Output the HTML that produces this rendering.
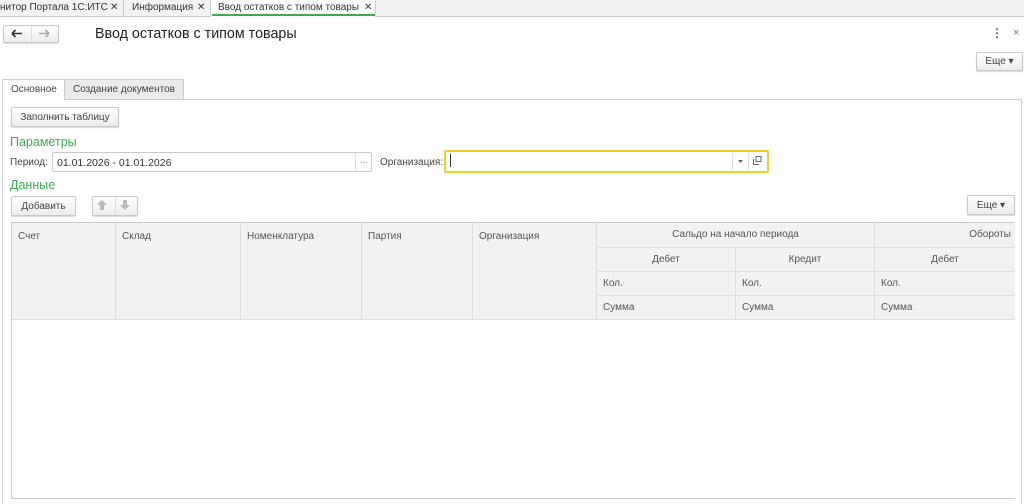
<!DOCTYPE html>
<html style="width:1024px;height:504px;overflow:hidden"><head><meta charset="utf-8"><style>
*{box-sizing:border-box;margin:0;padding:0}
body{width:1024px;height:504px;overflow:hidden;background:#fff;font-family:"Liberation Sans",sans-serif;font-size:10px;color:#444;position:relative}
.a{position:absolute;white-space:nowrap}
.btn{position:absolute;border:1px solid #c8c8c8;border-radius:2px;background:linear-gradient(#fff,#ececec);box-shadow:0 1px 1px rgba(0,0,0,.15);color:#444;text-align:center;white-space:nowrap}
.g{color:#3bab4e;font-size:12.5px}
.c{position:absolute;border-right:1px solid #ddd;border-bottom:1px solid #ddd;background:#f2f2f2;padding:0 6px;color:#555;font-size:10px;white-space:nowrap}
</style></head><body>
<div class="a" style="left:0;top:0;width:1024px;height:17px;background:#f2f2f2;border-bottom:1px solid #c8c8c8"></div>
<div class="a" style="left:0;top:2px;color:#333">нитор Портала 1С:ИТС</div>
<div class="a" style="left:110px;top:2px;color:#333">✕</div>
<div class="a" style="left:123px;top:0;width:1px;height:16px;background:#ccc"></div>
<div class="a" style="left:132px;top:2px;color:#333">Информация</div>
<div class="a" style="left:197px;top:2px;color:#333">✕</div>
<div class="a" style="left:210px;top:0;width:166px;height:17px;background:#fff;border-left:1px solid #ccc;border-right:1px solid #ccc"></div>
<div class="a" style="left:212px;top:14px;width:163px;height:2px;background:#3bab4e"></div>
<div class="a" style="left:218px;top:2px;color:#333">Ввод остатков с типом товары</div>
<div class="a" style="left:364px;top:2px;color:#333">✕</div>

<div class="btn" style="left:3px;top:25px;width:56px;height:18px"></div>
<div class="a" style="left:31px;top:26px;width:1px;height:16px;background:#ddd"></div>
<svg class="a" style="left:11px;top:29px" width="12" height="9"><path d="M1 4.5H11M1 4.5L4.5 1M1 4.5L4.5 8" stroke="#333" stroke-width="1.6" fill="none"/></svg>
<svg class="a" style="left:38px;top:29px" width="12" height="9"><path d="M1 4.5H11M11 4.5L7.5 1M11 4.5L7.5 8" stroke="#aaa" stroke-width="1.6" fill="none"/></svg>
<div class="a" style="left:95px;top:26px;font-size:14.3px;color:#222">Ввод остатков с типом товары</div>
<div class="a" style="left:991px;top:26px;font-size:12px;color:#666;font-weight:bold">⋮</div>
<div class="a" style="left:1013px;top:27px;font-size:11px;color:#777">×</div>
<div class="btn" style="left:976px;top:52px;width:47px;height:19px;line-height:18px">Еще ▾</div>

<div class="a" style="left:64px;top:79px;width:120px;height:20px;background:#ebebeb;border:1px solid #ccc;border-bottom:none;padding:4px 0 0 8px;color:#444">Создание документов</div>
<div class="a" style="left:2px;top:79px;width:63px;height:21px;background:#fff;border:1px solid #ccc;border-bottom:none;padding:4px 0 0 8px;color:#444;z-index:2">Основное</div>
<div class="a" style="left:2px;top:99px;width:1020px;height:410px;border:1px solid #ccc"></div>

<div class="btn" style="left:11px;top:107px;width:108px;height:20px;line-height:20px">Заполнить таблицу</div>
<div class="a g" style="left:10px;top:135px">Параметры</div>
<div class="a" style="left:10px;top:157px">Период:</div>
<div class="a" style="left:52px;top:152px;width:320px;height:20px;border:1px solid #c8c8c8;border-radius:2px;padding:4px 4px;color:#333;font-size:10.5px">01.01.2026 - 01.01.2026</div>
<div class="a" style="left:355px;top:153px;width:1px;height:18px;background:#ddd"></div>
<div class="a" style="left:360px;top:155px;font-size:9px;color:#777">...</div>
<div class="a" style="left:380px;top:157px">Организация:</div>
<div class="a" style="left:444px;top:150px;width:325px;height:23px;border:2px solid #f5cc2a;border-radius:2px"></div>
<div class="a" style="left:450px;top:154px;width:1px;height:13px;background:#333"></div>
<div class="a" style="left:732px;top:153px;width:1px;height:17px;background:#ddd"></div>
<div class="a" style="left:748px;top:153px;width:1px;height:17px;background:#ddd"></div>
<svg class="a" style="left:738px;top:160px" width="5" height="3"><path d="M0 0H5L2.5 3Z" fill="#666"/></svg>
<svg class="a" style="left:753px;top:156px" width="9" height="9"><rect x="3" y="0.5" width="5" height="5" fill="none" stroke="#666"/><path d="M0.5 3V8.5H6" fill="none" stroke="#666"/></svg>
<div class="a g" style="left:10px;top:178px">Данные</div>
<div class="btn" style="left:11px;top:196px;width:65px;height:20px;line-height:20px">Добавить</div>
<div class="btn" style="left:92px;top:196px;width:46px;height:20px"></div>
<div class="a" style="left:115px;top:197px;width:1px;height:18px;background:#ddd"></div>
<svg class="a" style="left:97px;top:200px" width="10" height="10"><path d="M5 0L10 5H7V10H3V5H0Z" fill="#bbb"/></svg>
<svg class="a" style="left:120px;top:200px" width="10" height="10"><path d="M5 10L10 5H7V0H3V5H0Z" fill="#bbb"/></svg>
<div class="btn" style="left:967px;top:195px;width:48px;height:20px;line-height:20px">Еще ▾</div>

<div class="a" style="left:11px;top:222px;width:1004px;height:277px;border:1px solid #c8c8c8;border-right:none;overflow:hidden">
<div class="c" style="left:0;top:0;width:104px;height:97px;padding-top:8px">Счет</div>
<div class="c" style="left:104px;top:0;width:125px;height:97px;padding-top:8px">Склад</div>
<div class="c" style="left:229px;top:0;width:121px;height:97px;padding-top:8px">Номенклатура</div>
<div class="c" style="left:350px;top:0;width:111px;height:97px;padding-top:8px">Партия</div>
<div class="c" style="left:461px;top:0;width:124px;height:97px;padding-top:8px">Организация</div>
<div class="c" style="left:585px;top:0;width:278px;height:25px;line-height:24px;text-align:center">Сальдо на начало периода</div>
<div class="c" style="left:863px;top:0;width:141px;height:25px;line-height:24px;text-align:right;padding-right:4px">Обороты</div>
<div class="c" style="left:585px;top:25px;width:139px;height:24px;line-height:23px;text-align:center">Дебет</div>
<div class="c" style="left:724px;top:25px;width:139px;height:24px;line-height:23px;text-align:center">Кредит</div>
<div class="c" style="left:863px;top:25px;width:141px;height:24px;line-height:23px;text-align:center">Дебет</div>
<div class="c" style="left:585px;top:49px;width:139px;height:24px;line-height:23px">Кол.</div>
<div class="c" style="left:724px;top:49px;width:139px;height:24px;line-height:23px">Кол.</div>
<div class="c" style="left:863px;top:49px;width:141px;height:24px;line-height:23px">Кол.</div>
<div class="c" style="left:585px;top:73px;width:139px;height:24px;line-height:23px">Сумма</div>
<div class="c" style="left:724px;top:73px;width:139px;height:24px;line-height:23px">Сумма</div>
<div class="c" style="left:863px;top:73px;width:141px;height:24px;line-height:23px">Сумма</div>
</div>
</body></html>
